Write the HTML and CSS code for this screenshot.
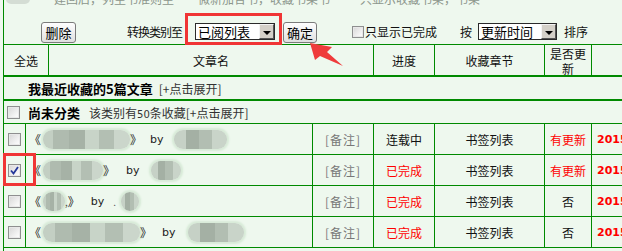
FILE: index.html
```html
<!DOCTYPE html>
<html lang="zh-CN">
<head>
    <meta charset="UTF-8">
    <title>我的书架</title>
    <link rel="stylesheet" href="styles.css">
</head>
<body>
    <div class="page">
        <div class="topline">
            <span class="top-icon"></span>
            <span class="top-text t1">建回后，列至书准则至</span>
            <span class="top-text t2">微新加合书，收藏书架书</span>
            <span class="top-text t3">只显示收藏书架，书架</span>
        </div>

        <div class="toolbar">
            <button class="btn btn-del">删除</button>
            <span class="tool-text label-move">转换类别至</span>
            <span class="select sel-cat"><span class="sel-text">已阅列表</span><span class="sel-arrow"></span></span>
            <button class="btn btn-ok">确定</button>
            <span class="chk chk-tool"></span>
            <span class="tool-text label-done">只显示已完成</span>
            <span class="tool-text label-by">按</span>
            <span class="select sel-sort"><span class="sel-text">更新时间</span><span class="sel-arrow"></span></span>
            <span class="tool-text label-sort">排序</span>
        </div>

        <div class="head">
            <div>全选</div>
            <div>文章名</div>
            <div>进度</div>
            <div>收藏章节</div>
            <div class="upd-head">是否更<br>新</div>
            <div></div>
        </div>

        <div class="group recent">
            <b>我最近收藏的5篇文章</b>
            <span class="expand">[+点击展开]</span>
        </div>

        <div class="group uncat">
            <span class="chk"></span>
            <b>尚未分类</b>
            <span class="count">该类别有<span class="num">50</span>条收藏[+点击展开]</span>
        </div>

        <div class="item">
            <div><span class="chk"></span></div>
            <div class="title">
                <span class="q">《</span><span class="blob w87"></span><span class="q qr">》</span>
                <span class="by by8">by</span><span class="blob alt w53"></span>
            </div>
            <div class="note">[备注]</div>
            <div>连载中</div>
            <div>书签列表</div>
            <div class="red">有更新</div>
            <div class="date">2015</div>
        </div>

        <div class="item">
            <div>
                <span class="chk on">
                    <svg width="11" height="11" viewBox="0 0 11 11"><path d="M2 5.5 L4.5 8.5 L9 2" fill="none" stroke="#23389a" stroke-width="1.8"/></svg>
                </span>
            </div>
            <div class="title">
                <span class="q">《</span><span class="blob w60"></span><span class="q qr">》</span>
                <span class="by by11">by</span><span class="blob alt w30"></span>
            </div>
            <div class="note">[备注]</div>
            <div class="red">已完成</div>
            <div>书签列表</div>
            <div class="red">有更新</div>
            <div class="date">2015</div>
        </div>

        <div class="item">
            <div><span class="chk"></span></div>
            <div class="title">
                <span class="q">《</span><span class="blob w22"></span><span class="dot">,</span><span class="q qr">》</span>
                <span class="by by11">by</span><span class="dot dot2">.</span><span class="blob alt w18"></span>
            </div>
            <div class="note">[备注]</div>
            <div class="red">已完成</div>
            <div>书签列表</div>
            <div>否</div>
            <div class="date">2015</div>
        </div>

        <div class="item">
            <div><span class="chk"></span></div>
            <div class="title">
                <span class="q">《</span><span class="blob w97"></span><span class="q qr">》</span>
                <span class="by by10">by</span><span class="blob alt w56"></span>
            </div>
            <div class="note">[备注]</div>
            <div class="red">已完成</div>
            <div>书签列表</div>
            <div>否</div>
            <div class="date">2015</div>
        </div>

        <div class="item last"></div>
    </div>

    <!-- annotation marks drawn over the screenshot -->
    <div class="mark mark-select"></div>
    <div class="mark mark-check"></div>
    <svg class="arrow" width="622" height="251" viewBox="0 0 622 251">
        <polygon points="310,43 332,47 327,52 343,66 320,56 315,60" fill="#ef3b3b"/>
    </svg>
</body>
</html>
```

FILE: styles.css
```css
* {
    box-sizing: border-box;
}

body {
    margin: 0;
    width: 622px;
    height: 251px;
    overflow: hidden;
    position: relative;
    background: #eef8ee;
    font-family: "Noto Sans CJK SC", "DejaVu Sans", sans-serif;
    font-size: 12px;
    color: #111;
}

.page {
    margin-left: 3px;
    border-left: 1px solid #008a00;
    height: 251px;
    overflow: hidden;
}

/* cut-off line at the very top */
.topline {
    height: 22px;
    overflow: hidden;
    display: flex;
    color: #8c968c;
    line-height: 14px;
}

.topline span {
    flex: none;
    margin-top: -8px;
}

.top-icon {
    width: 24px;
    height: 12px;
    margin-left: 2px;
    background: #d4ddd4;
    border-radius: 5px;
}

.t1 { margin-left: 24px; }
.t2 { margin-left: 24px; }
.t3 { margin-left: 30px; }

/* toolbar */
.toolbar {
    height: 22px;
    display: flex;
    align-items: flex-start;
}

.toolbar > * {
    flex: none;
}

.btn {
    height: 21px;
    width: 35px;
    padding: 0;
    border: 1px solid #7b7b7b;
    border-radius: 3px;
    background: linear-gradient(#fefefe, #e0e0e0);
    font: 13px/19px "Noto Sans CJK SC", sans-serif;
    color: #000;
}

.btn-del { margin-left: 37px; }
.btn-ok { margin-left: 8px; width: 34px; }

.tool-text {
    margin-top: 1px;
    line-height: 18px;
    color: #111;
}

.label-move { margin-left: 51px; letter-spacing: -1px; }
.label-done { margin-left: 1px; }
.label-by { margin-left: 23px; }
.label-sort { margin-left: 7px; }

.select {
    margin-top: 1px;
    height: 17px;
    display: flex;
    background: #fff;
    border: 1px solid #2a2a2a;
}

.sel-cat { margin-left: 13px; width: 80px; }
.sel-sort { margin-left: 6px; width: 79px; }

.sel-text {
    flex: 1;
    font-size: 13px;
    line-height: 15px;
    padding-left: 2px;
    color: #000;
}

.sel-arrow {
    width: 15px;
    height: 15px;
    background: #d4d0c8;
    border: 1px solid;
    border-color: #f4f4f4 #555 #555 #f4f4f4;
    display: flex;
    align-items: center;
    justify-content: center;
}

.sel-arrow::after {
    content: "";
    margin-top: 3px;
    border-left: 4px solid transparent;
    border-right: 4px solid transparent;
    border-top: 4px solid #000;
}

/* checkboxes */
.chk {
    display: inline-flex;
    align-items: center;
    justify-content: center;
    width: 13px;
    height: 13px;
    border: 1px solid #8e8f8f;
    background: linear-gradient(135deg, #d6d6d6, #f4f4f4 70%, #fff);
    box-shadow: inset 0 0 0 1px #e8e8e8;
    flex: none;
}

.chk-tool {
    width: 12px;
    height: 12px;
    margin-top: 4px;
    margin-left: 35px;
}

/* table head */
.head {
    display: grid;
    grid-template-columns: 45px 325px 61px 110px 47px 1fr;
    height: 33px;
    border-top: 1px solid #008a00;
    border-bottom: 2px solid #008a00;
}

.head > div {
    display: flex;
    align-items: center;
    justify-content: center;
    text-align: center;
    border-right: 1px solid #008a00;
    line-height: 15px;
}

.head > div:last-child {
    border-right: 0;
}

.head .upd-head {
    line-height: 15px;
    font-size: 12px;
    padding-top: 1px;
}

/* group rows */
.group {
    display: flex;
    align-items: center;
    white-space: nowrap;
}

.group b {
    font-size: 13px;
    color: #000;
}

.recent {
    height: 24px;
    padding-left: 24px;
    border-bottom: 2px solid #008a00;
}

.uncat {
    height: 23px;
    padding-left: 3px;
    border-bottom: 1px solid #008a00;
}

.uncat b {
    margin-left: 8px;
}

.expand {
    margin-left: 6px;
    color: #333;
}

.count {
    margin-left: 9px;
    color: #333;
}

.num {
    font-family: "DejaVu Sans", sans-serif;
    font-size: 10px;
}

/* data rows */
.item {
    display: grid;
    grid-template-columns: 22px 287px 61px 61px 110px 47px 1fr;
    height: 31px;
    border-bottom: 1px solid #008a00;
}

.item.last {
    border-bottom: 0;
}

.item > div {
    display: flex;
    align-items: center;
    justify-content: center;
    border-right: 1px solid #008a00;
    white-space: nowrap;
}

.item > div:last-child {
    border-right: 0;
}

.item .title {
    justify-content: flex-start;
    padding-left: 3px;
}

.q {
    color: #222;
}

.blob {
    height: 19px;
    margin-left: 2px;
    border-radius: 9px;
    background: linear-gradient(90deg, #c3cfc3 0 12%, #afbbaf 12% 30%, #a6b2a6 30% 48%, #c8d4c8 48% 64%, #b3bfb3 64% 82%, #cbd6cb 82% 100%);
    box-shadow: 0 0 2px 2px #d7ead7;
    flex: none;
}

.blob.alt {
    background: linear-gradient(90deg, #c6d1c6 0 22%, #a4b0a4 22% 48%, #b2beb2 48% 72%, #c9d4c9 72% 100%);
}

.w87 { width: 87px; }
.w53 { width: 53px; }
.w60 { width: 60px; }
.w30 { width: 30px; }
.w22 { width: 22px; }
.w18 { width: 18px; }
.w97 { width: 97px; }
.w56 { width: 56px; }

.qr {
    margin-left: 0;
}

.by {
    font-family: "DejaVu Sans", sans-serif;
    font-size: 11px;
    color: #222;
}

.by8 { margin-left: 8px; margin-right: 8px; }
.by10 { margin-left: 10px; margin-right: 10px; }
.by11 { margin-left: 11px; margin-right: 9px; }

.dot {
    color: #555;
    font-size: 10px;
}

.dot2 {
    margin-right: 3px;
}

.note {
    color: #777;
    letter-spacing: 1px;
}

.red {
    color: #f00;
}

.item .date {
    justify-content: flex-start;
    padding-left: 5px;
    font-family: "DejaVu Sans", sans-serif;
    font-weight: bold;
    font-size: 11px;
    color: #f00;
}

/* red annotation marks */
.mark {
    position: absolute;
    border: 3px solid #f03535;
}

.mark-select {
    left: 185px;
    top: 13px;
    width: 97px;
    height: 32px;
}

.mark-check {
    left: 3px;
    top: 153px;
    width: 33px;
    height: 33px;
}

.arrow {
    position: absolute;
    left: 0;
    top: 0;
}
```
